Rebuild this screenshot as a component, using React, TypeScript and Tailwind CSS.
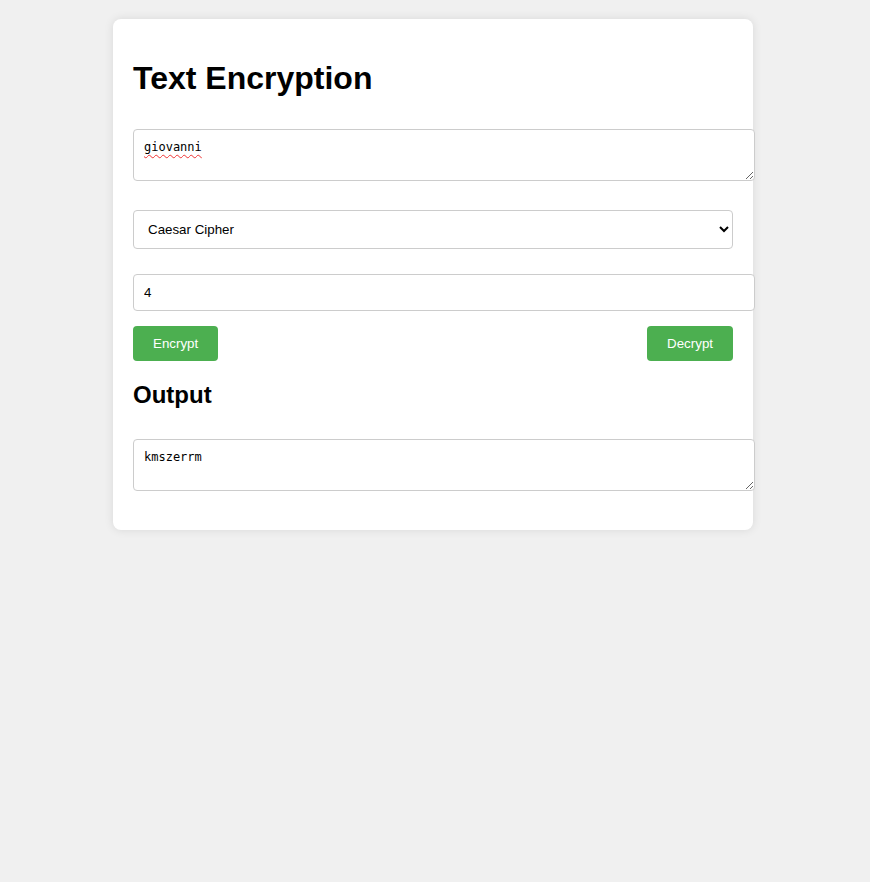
import React, { useState } from "react";

const caesar = (text: string, shift: number) =>
  text.replace(/[a-z]/gi, (ch) => {
    const base = ch <= "Z" ? 65 : 97;
    return String.fromCharCode(((ch.charCodeAt(0) - base + shift + 26 * 10) % 26) + base);
  });

const App = () => {
  const [input, setInput] = useState("giovanni");
  const [method, setMethod] = useState("caesar");
  const [key, setKey] = useState("4");
  const [output, setOutput] = useState("kmszerrm");

  const run = (dir: number) => {
    const n = parseInt(key, 10) || 0;
    setOutput(caesar(input, dir * n));
  };

  return (
    <div className="min-h-screen bg-[#f0f0f0] pt-[19px] font-['Liberation_Sans',Arial,sans-serif] text-black">
      {/* Card */}
      <div className="ml-[113px] w-[640px] bg-white rounded-lg shadow-[0_0_10px_rgba(0,0,0,0.1)] px-[20px] pt-[20px] pb-[39px]">
        <h1 className="mt-[21px] text-[32px] leading-[37px] font-bold">Text Encryption</h1>

        <textarea
          value={input}
          onChange={(e) => setInput(e.target.value)}
          rows={2}
          className="block mt-[32px] w-[622px] h-[52px] p-[10px] border border-[#ccc] rounded bg-white font-['DejaVu_Sans_Mono',monospace] text-[12px] leading-[15px] underline decoration-wavy decoration-[#e33] decoration-1 underline-offset-[3px]"
        />

        <select
          value={method}
          onChange={(e) => setMethod(e.target.value)}
          className="block mt-[29px] w-[600px] h-[39px] px-[10px] border border-[#ccc] rounded bg-white text-[13.33px]"
        >
          <option value="caesar">Caesar Cipher</option>
          <option value="reverse">Reverse</option>
        </select>

        <input
          type="text"
          value={key}
          onChange={(e) => setKey(e.target.value)}
          className="block mt-[25px] w-[622px] h-[37px] px-[10px] border border-[#ccc] rounded bg-white text-[13.33px]"
        />

        <div className="mt-[15px] w-[600px] flex justify-between">
          <button
            onClick={() => run(1)}
            className="h-[35px] px-[20px] rounded bg-[#4caf50] text-white text-[13.33px]"
          >
            Encrypt
          </button>
          <button
            onClick={() => run(-1)}
            className="h-[35px] px-[20px] rounded bg-[#4caf50] text-white text-[13.33px]"
          >
            Decrypt
          </button>
        </div>

        <h2 className="mt-[20px] text-[24px] leading-[28px] font-bold">Output</h2>

        <textarea
          value={output}
          readOnly
          rows={2}
          className="block mt-[30px] w-[622px] h-[52px] p-[10px] border border-[#ccc] rounded bg-white font-['DejaVu_Sans_Mono',monospace] text-[12px] leading-[15px]"
        />
      </div>
    </div>
  );
};

export default App;
